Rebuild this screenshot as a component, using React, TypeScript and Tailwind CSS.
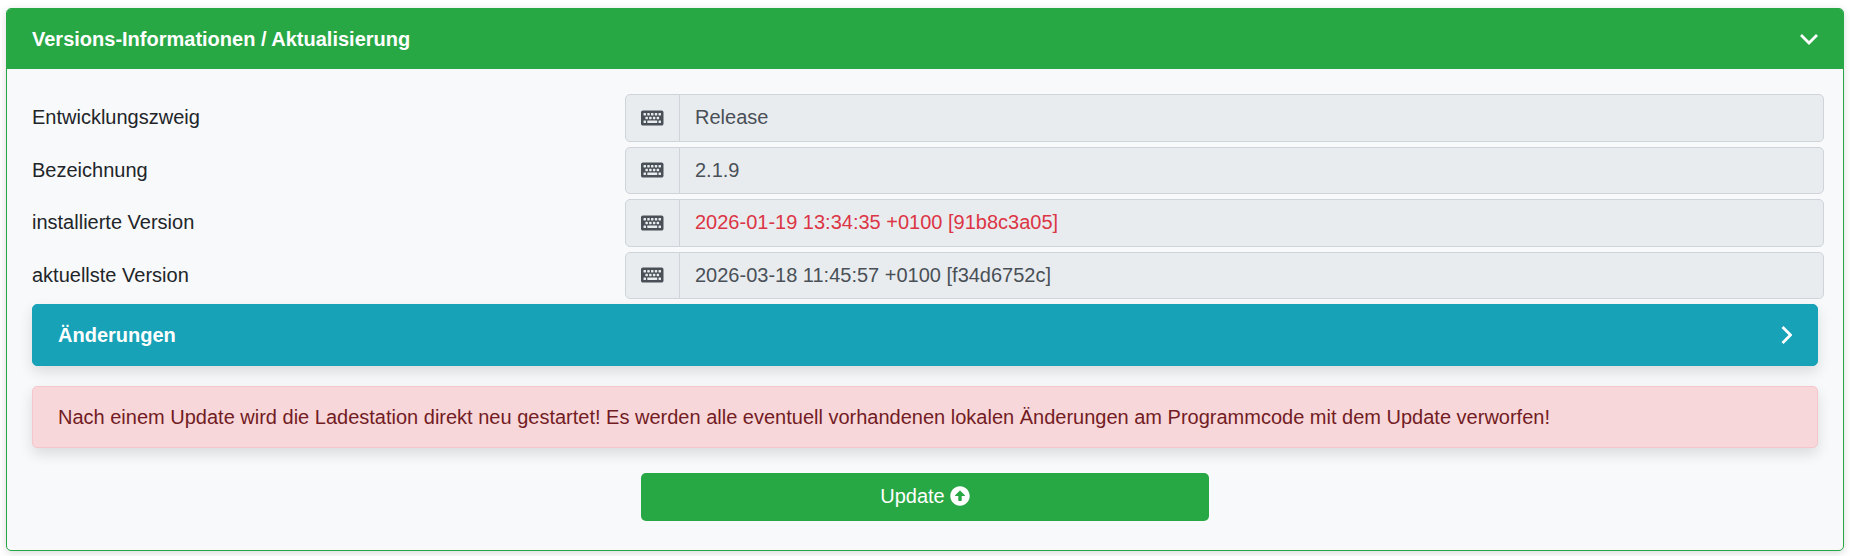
import { ReactNode } from "react"
import { FaArrowAltCircleUp, FaKeyboard } from "react-icons/fa"

function ReadonlyRow({ label, value, danger }: { label: string; value: string; danger?: boolean }) {
    return (
        <div className="flex h-[47.5px] mb-[5px] -ml-[5px] -mr-[6px]">
            <label className="w-[598px] px-[5px] pt-[8px] leading-[30px]">{label}</label>
            <div className="flex-1 flex">
                <div className="flex items-center justify-center w-[55px] bg-[#e9ecef] border border-[#ced4da] rounded-l-[5px] text-[#495057]">
                    <FaKeyboard className="w-[22.5px] h-[20px]" />
                </div>
                <div className={`flex-1 pt-[7px] leading-[30px] -ml-px px-[15px] bg-[#e9ecef] border border-[#ced4da] rounded-r-[5px] ${danger ? "text-[#dc3545]" : "text-[#495057]"}`}>
                    {value}
                </div>
            </div>
        </div>
    )
}

function CardHeader({ children, icon }: { children: ReactNode; icon: ReactNode }) {
    return (
        <div className="flex items-center justify-between px-[25px] py-[15px] font-bold text-white">
            <span className="leading-[30px]">{children}</span>
            {icon}
        </div>
    )
}

function ChevronDown() {
    return (
        <svg viewBox="0 0 18 12" className="w-[18px] h-[12px]" fill="none" stroke="currentColor" strokeWidth="2.8">
            <path d="M1 2 L9 10 L17 2" />
        </svg>
    )
}

function ChevronRight() {
    return (
        <svg viewBox="0 0 11 18" className="w-[11px] h-[18px]" fill="none" stroke="currentColor" strokeWidth="2.8">
            <path d="M1.5 1 L9.5 9 L1.5 17" />
        </svg>
    )
}

export default function App() {
    return (
        <div className="px-[6px] pt-[8px] pb-[5px] bg-white font-['Liberation_Sans',Arial,sans-serif] text-[20px] text-[#212529]">
            <div className="border border-[#28a745] rounded-[5px] bg-[#f8f9fa] shadow-[0_2px_8px_rgba(0,0,0,0.15)] overflow-hidden">
                <div className="bg-[#28a745]">
                    <CardHeader icon={<ChevronDown />}>
                        Versions-Informationen / Aktualisierung
                    </CardHeader>
                </div>
                <div className="p-[25px]">
                    <ReadonlyRow label="Entwicklungszweig" value="Release" />
                    <ReadonlyRow label="Bezeichnung" value="2.1.9" />
                    <ReadonlyRow label="installierte Version" value="2026-01-19 13:34:35 +0100 [91b8c3a05]" danger />
                    <ReadonlyRow label="aktuellste Version" value="2026-03-18 11:45:57 +0100 [f34d6752c]" />

                    <div className="mb-[20px] bg-[#17a2b8] border border-[#17a2b8] rounded-[5px] shadow-[0_6px_14px_rgba(0,0,0,0.12)]">
                        <CardHeader icon={<ChevronRight />}>
                            Änderungen
                        </CardHeader>
                    </div>

                    <div className="mb-[25px] px-[25px] py-[15px] leading-[30px] bg-[#f8d7da] border border-[#f5c6cb] rounded-[5px] text-[#721c24] shadow-[0_6px_14px_rgba(0,0,0,0.12)]">
                        Nach einem Update wird die Ladestation direkt neu gestartet! Es werden alle eventuell vorhandenen lokalen Änderungen am Programmcode mit dem Update verworfen!
                    </div>

                    <div className="flex justify-center -mx-[5px] mb-[4px]">
                        <div className="w-1/3 px-[15px]">
                            <button className="flex items-center justify-center gap-[5px] w-full h-[47.5px] pb-[2px] bg-[#28a745] rounded-[5px] text-white">
                                Update <FaArrowAltCircleUp className="w-[20px] h-[20px]" />
                            </button>
                        </div>
                    </div>
                </div>
            </div>
        </div>
    )
}
